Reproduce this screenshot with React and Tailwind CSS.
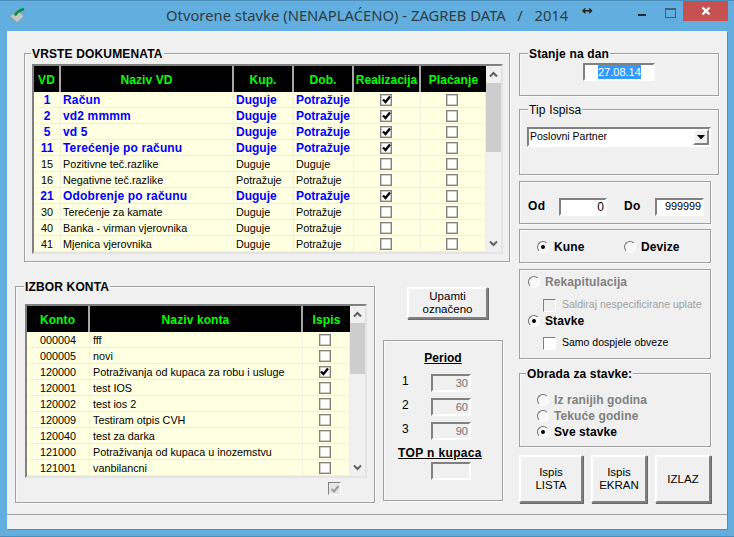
import React from 'react';

const sunken = "border-2 border-t-[#808080] border-l-[#808080] border-r-white border-b-white";
const raised = "border-2 border-t-white border-l-white border-r-[#808080] border-b-[#808080] shadow-[1px_1px_0_#696969]";
const groupBox = "relative border border-[#a0a0a0] shadow-[inset_1px_1px_0_#fafafa,1px_1px_0_#fafafa]";
const legend = "absolute left-[6px] -top-[7px] bg-[#f0f0f0] px-[1px] text-[12px] leading-[14px] font-bold tracking-[0.15px] text-black";

const dokumenti = [
  ['1', 'Račun', 'Duguje', 'Potražuje', true, true],
  ['2', 'vd2 mmmm', 'Duguje', 'Potražuje', true, true],
  ['5', 'vd 5', 'Duguje', 'Potražuje', true, true],
  ['11', 'Terećenje po računu', 'Duguje', 'Potražuje', true, true],
  ['15', 'Pozitivne teč.razlike', 'Duguje', 'Duguje', false, false],
  ['16', 'Negativne teč.razlike', 'Potražuje', 'Potražuje', false, false],
  ['21', 'Odobrenje po računu', 'Duguje', 'Potražuje', true, true],
  ['30', 'Terećenje za kamate', 'Duguje', 'Potražuje', false, false],
  ['40', 'Banka - virman vjerovnika', 'Duguje', 'Potražuje', false, false],
  ['41', 'Mjenica vjerovnika', 'Duguje', 'Potražuje', false, false],
];

const konta = [
  ['000004', 'fff', false],
  ['000005', 'novi', false],
  ['120000', 'Potraživanja od kupaca za robu i usluge', true],
  ['120001', 'test IOS', false],
  ['120002', 'test ios 2', false],
  ['120009', 'Testiram otpis CVH', false],
  ['120040', 'test za darka', false],
  ['121000', 'Potraživanja od kupaca u inozemstvu', false],
  ['121001', 'vanbilancni', false],
];

function Check({ checked }) {
  return (
    <span className="flex h-[12px] w-[12px] items-center justify-center border border-[#808080] bg-white shadow-[inset_0_0_0_0.5px_#a0a0a0]">
      {checked && (
        <svg width="9" height="9" viewBox="0 0 9 9">
          <path d="M1 4.5 L3.5 7 L8 1.5" fill="none" stroke="#000" strokeWidth="2.3" />
        </svg>
      )}
    </span>
  );
}

function Radio({ on }) {
  return (
    <span className="flex h-[12px] w-[12px] items-center justify-center rounded-full border border-t-[#707070] border-l-[#707070] border-r-white border-b-white bg-[#f8f8f8]">
      {on && <span className="h-[4px] w-[4px] rounded-full bg-black" />}
    </span>
  );
}

function Scrollbar({ thumb }) {
  return (
    <div className="flex w-[17px] flex-col bg-[#f0f0f0]">
      <div className="flex h-[17px] items-center justify-center">
        <svg width="9" height="7" viewBox="0 0 9 7"><path d="M1 5.5 L4.5 2 L8 5.5" fill="none" stroke="#606060" strokeWidth="2" /></svg>
      </div>
      <div className={"w-[15px] bg-[#cdcdcd] " + thumb} />
      <div className="flex-1" />
      <div className="flex h-[17px] items-center justify-center">
        <svg width="9" height="7" viewBox="0 0 9 7"><path d="M1 1.5 L4.5 5 L8 1.5" fill="none" stroke="#606060" strokeWidth="2" /></svg>
      </div>
    </div>
  );
}

function HeadCell({ children, className }) {
  return (
    <div className={"flex h-[26px] items-center justify-center border-r-2 border-[#a8a8a8] bg-black pt-[1px] text-[12px] font-bold text-[#00ff00] last:border-r-0 " + (className || "tracking-[0.1px]")}>
      {children}
    </div>
  );
}

function Cell({ children, className }) {
  return (
    <div className={"flex h-[16px] items-center border-r border-b border-[#f0f0dc] whitespace-nowrap " + (className || "")}>
      {children}
    </div>
  );
}

function TableBody({ children, className }) {
  return (
    <div className={"flex border-2 border-t-[#808080] border-l-[#808080] border-r-[#e4e4e4] border-b-[#e4e4e4] " + className}>
      {children}
    </div>
  );
}

function VrsteDokumenata() {
  const cols = "grid grid-cols-[27px_173px_60px_60px_67px_65px]";
  return (
    <div className={groupBox + " ml-[17px] h-[209px] w-[486px] pl-[7px] pt-[10px]"}>
      <div className={legend}>VRSTE DOKUMENATA</div>
      <TableBody className="w-[471px]">
        <div className="w-[452px]">
          <div className={cols}>
            <HeadCell>VD</HeadCell>
            <HeadCell>Naziv VD</HeadCell>
            <HeadCell>Kup.</HeadCell>
            <HeadCell>Dob.</HeadCell>
            <HeadCell className="tracking-normal">Realizacija</HeadCell>
            <HeadCell>Plaćanje</HeadCell>
          </div>
          <div className="bg-[#ffffe1]">
            {dokumenti.map((r) => {
              const txt = r[5] ? "text-[12px] font-bold text-[#0000ff]" : "text-[10.8px] text-black";
              const nudge = r[5] ? "" : " pt-[1px]";
              return (
                <div key={r[0]} className={cols + " " + txt}>
                  <Cell className={"justify-center" + nudge}>{r[0]}</Cell>
                  <Cell className={"pl-[2px]" + nudge + (r[5] ? " tracking-[0.15px]" : "")}>{r[1]}</Cell>
                  <Cell className={"pl-[2px]" + nudge}>{r[2]}</Cell>
                  <Cell className={"pl-[2px]" + nudge}>{r[3]}</Cell>
                  <Cell className="justify-center pr-[2px]"><Check checked={r[4]} /></Cell>
                  <Cell className="justify-center pr-[2px]"><Check /></Cell>
                </div>
              );
            })}
          </div>
        </div>
        <Scrollbar thumb="h-[69px]" />
      </TableBody>
    </div>
  );
}

function IzborKonta() {
  const cols = "grid grid-cols-[63px_213px_47px]";
  return (
    <div className={groupBox + " ml-[8px] h-[217px] w-[360px] pl-[9px] pt-[17px]"}>
      <div className={legend + " left-[8px]"}>IZBOR KONTA</div>
      <TableBody className="w-[342px]">
        <div className="w-[323px]">
          <div className={cols}>
            <HeadCell>Konto</HeadCell>
            <HeadCell>Naziv konta</HeadCell>
            <HeadCell>Ispis</HeadCell>
          </div>
          <div className="bg-[#ffffe1] text-[10.8px] text-black">
            {konta.map((r) => (
              <div key={r[0]} className={cols}>
                <Cell className="justify-center pt-[1px]">{r[0]}</Cell>
                <Cell className="pl-[3px] pt-[1px]">{r[1]}</Cell>
                <Cell className="justify-center pr-[3px]"><Check checked={r[2]} /></Cell>
              </div>
            ))}
          </div>
        </div>
        <Scrollbar thumb="h-[51px]" />
      </TableBody>
      <div className="mt-[4px] ml-[303px] flex h-[13px] w-[13px] items-center justify-center border border-t-[#808080] border-l-[#808080] border-r-white border-b-white bg-[#e6e6e6]">
        <svg width="10" height="10" viewBox="0 0 10 10">
          <path d="M1.5 5 L4 7.5 L8.5 2" fill="none" stroke="#9a9a9a" strokeWidth="2" />
        </svg>
      </div>
    </div>
  );
}

function PeriodRow({ n, value }) {
  return (
    <div className="flex h-[18px] items-center text-[12px]">
      <span className="-mt-[5px] w-[47px] pl-[18px]">{n}</span>
      <div className={sunken + " flex h-[18px] w-[40px] items-center justify-end pr-[1px] text-[11px] text-[#707070]"}>{value}</div>
    </div>
  );
}

function Period() {
  return (
    <div className={groupBox + " ml-[8px] mt-[21px] flex h-[161px] w-[120px] flex-col pt-[10px]"}>
      <div className="text-center text-[12px] font-bold leading-[15px] underline">Period</div>
      <div className="mt-[8px] flex flex-col gap-[6px]">
        <PeriodRow n="1" value="30" />
        <PeriodRow n="2" value="60" />
        <PeriodRow n="3" value="90" />
      </div>
      <div className="mt-[6px] pr-[6px] text-center text-[12px] font-bold leading-[15px] tracking-[0.35px] underline whitespace-nowrap">TOP n kupaca</div>
      <div className={sunken + " ml-[47px] mt-[1px] h-[18px] w-[40px] bg-[#f0f0f0]"} />
    </div>
  );
}

function RadioLine({ on, muted, children, className }) {
  return (
    <div className={"flex h-[16px] items-center text-[12px] font-bold tracking-[0.1px] " + (muted ? "text-[#808080] " : "text-black ") + (className || "")}>
      <Radio on={on} />
      <span className="ml-[5px]">{children}</span>
    </div>
  );
}

function CheckLine({ muted, children }) {
  return (
    <div className={"ml-[15px] flex h-[16px] items-center text-[10.5px] whitespace-nowrap " + (muted ? "text-[#a0a0a0]" : "text-black")}>
      <span className={"h-[13px] w-[13px] border border-t-[#808080] border-l-[#808080] border-r-white border-b-white " + (muted ? "bg-[#f0f0f0]" : "bg-white")} />
      <span className="ml-[6px]">{children}</span>
    </div>
  );
}

function IspisButton({ className, children }) {
  return (
    <button className={raised + " flex h-[48px] flex-col items-center justify-center bg-[#f0f0f0] text-[11.5px] leading-[13px] text-black " + className}>
      {children}
    </button>
  );
}

function RightColumn() {
  return (
    <div className="ml-[9px] flex w-[200px] flex-col pt-[22px]">
      <div className={groupBox + " h-[43px] w-[200px] pl-[63px] pt-[9px]"}>
        <div className={legend + " left-[8px]"}>Stanje na dan</div>
        <div className={sunken + " flex h-[18px] w-[72px] items-center bg-white pl-[13px]"}>
          <span className="bg-[#3399ff] text-[11px] leading-[14px] text-white">27.08.14</span>
        </div>
      </div>
      <div className={groupBox + " mt-[13px] h-[66px] w-[200px] pl-[7px] pt-[17px]"}>
        <div className={legend + " left-[8px] text-[11px] font-normal"}>Tip Ispisa</div>
        <div className={sunken + " flex h-[20px] w-[184px] items-center justify-between bg-white pl-[1px] text-[10.5px]"}>
          <span>Poslovni Partner</span>
          <span className={raised + " flex h-[16px] w-[16px] items-center justify-center bg-[#f0f0f0] shadow-none"}>
            <svg width="8" height="5" viewBox="0 0 8 5"><path d="M0 0 H8 L4 4.5 Z" fill="#000" /></svg>
          </span>
        </div>
      </div>
      <div className={groupBox + " mt-[6px] flex h-[43px] w-[192px] items-center pl-[8px] pt-[8px] text-[12px] font-bold tracking-[0.3px]"}>
        <span className="-mt-[2px] w-[31px]">Od</span>
        <div className={sunken + " flex h-[18px] w-[48px] items-center justify-end bg-white pr-[1px] text-[12px] font-normal tracking-normal"}>0</div>
        <span className="-mt-[2px] ml-[17px] w-[31px]">Do</span>
        <div className={sunken + " flex h-[18px] w-[49px] items-center justify-end bg-white pr-[1px] text-[10.8px] font-normal tracking-normal"}>999999</div>
      </div>
      <div className={groupBox + " mt-[5px] flex h-[34px] w-[192px] items-center pl-[17px] pt-[2px]"}>
        <RadioLine on className="w-[87px]">Kune</RadioLine>
        <RadioLine>Devize</RadioLine>
      </div>
      <div className={groupBox + " mt-[6px] flex h-[90px] w-[192px] flex-col pl-[8px] pt-[4px]"}>
        <RadioLine muted>Rekapitulacija</RadioLine>
        <div className="mt-[7px]"><CheckLine muted>Saldiraj nespecificirane uplate</CheckLine></div>
        <RadioLine on>Stavke</RadioLine>
        <div className="mt-[6px]"><CheckLine>Samo dospjele obveze</CheckLine></div>
      </div>
      <div className={groupBox + " mt-[14px] flex h-[74px] w-[192px] flex-col pl-[17px] pt-[18px]"}>
        <div className={legend}>Obrada za stavke:</div>
        <RadioLine muted>Iz ranijih godina</RadioLine>
        <RadioLine muted>Tekuće godine</RadioLine>
        <RadioLine on>Sve stavke</RadioLine>
      </div>
      <div className="mt-[8px] flex gap-[8px]">
        <IspisButton className="w-[64px]"><span>Ispis</span><span>LISTA</span></IspisButton>
        <IspisButton className="w-[56px]"><span>Ispis</span><span>EKRAN</span></IspisButton>
        <IspisButton className="w-[56px]">IZLAZ</IspisButton>
      </div>
    </div>
  );
}

function TitleBar() {
  return (
    <div className="flex h-[31px] items-start border-t border-[#4b8fbd] text-[#2f3b44]">
      <div className="ml-[9px] mt-[6px] w-[157px]">
        <svg width="17" height="16" viewBox="0 0 17 16">
          <path d="M1 9.5 L8 3.5 L15 9 L8 15.5 Z" fill="#c4c8c4" stroke="#8f9690" strokeWidth="0.6" />
          <path d="M6 8.5 Q8 4 15 2" fill="none" stroke="#0f8a45" strokeWidth="2.8" />
        </svg>
      </div>
      <div className="mt-[3px] w-[416px] whitespace-pre font-['Noto_Sans',sans-serif] text-[14.8px] leading-[22px]">Otvorene stavke (NENAPLAĆENO) - ZAGREB DATA   /   2014</div>
      <div className="mt-[1px] w-[56px] font-['DejaVu_Sans',sans-serif] text-[13px] font-bold leading-[18px] text-[#222]">↔</div>
      <div className="mt-[13px] h-[2px] w-[8px] bg-[#1d2b36]" />
      <div className="ml-[19px] mt-[7px] h-[10px] w-[11px] border border-t-2 border-[#3f5f78]" />
      <div className="ml-[7px] flex h-[20px] w-[45px] items-center justify-center bg-[#c75050]">
        <svg width="10" height="10" viewBox="0 0 10 10"><path d="M1.5 1.5 L8.5 8.5 M8.5 1.5 L1.5 8.5" stroke="#fff" strokeWidth="2.4" /></svg>
      </div>
    </div>
  );
}

export default function App() {
  return (
    <div className="flex h-[537px] w-[734px] flex-col overflow-hidden border-b border-[#4b8fbd] bg-[#62afdf] font-['Liberation_Sans',Arial,sans-serif]">
      <TitleBar />
      <div className="ml-[7px] flex h-[498px] w-[720px] flex-col bg-[#f0f0f0] text-black shadow-[1px_1px_0_#4b8fbd]">
        <div className="flex flex-1">
          <div className="flex w-[503px] flex-col pt-[22px]">
            <VrsteDokumenata />
            <div className="mt-[24px] flex">
              <IzborKonta />
              <div className="flex flex-col">
                <button className={raised + " ml-[32px] mt-[1px] h-[32px] w-[81px] bg-[#f0f0f0] text-[11.5px] leading-[13px]"}>Upamti<br />označeno</button>
                <Period />
              </div>
            </div>
          </div>
          <RightColumn />
        </div>
        <div className="h-[15px] border-t border-[#a0a0a0]" />
      </div>
    </div>
  );
}
